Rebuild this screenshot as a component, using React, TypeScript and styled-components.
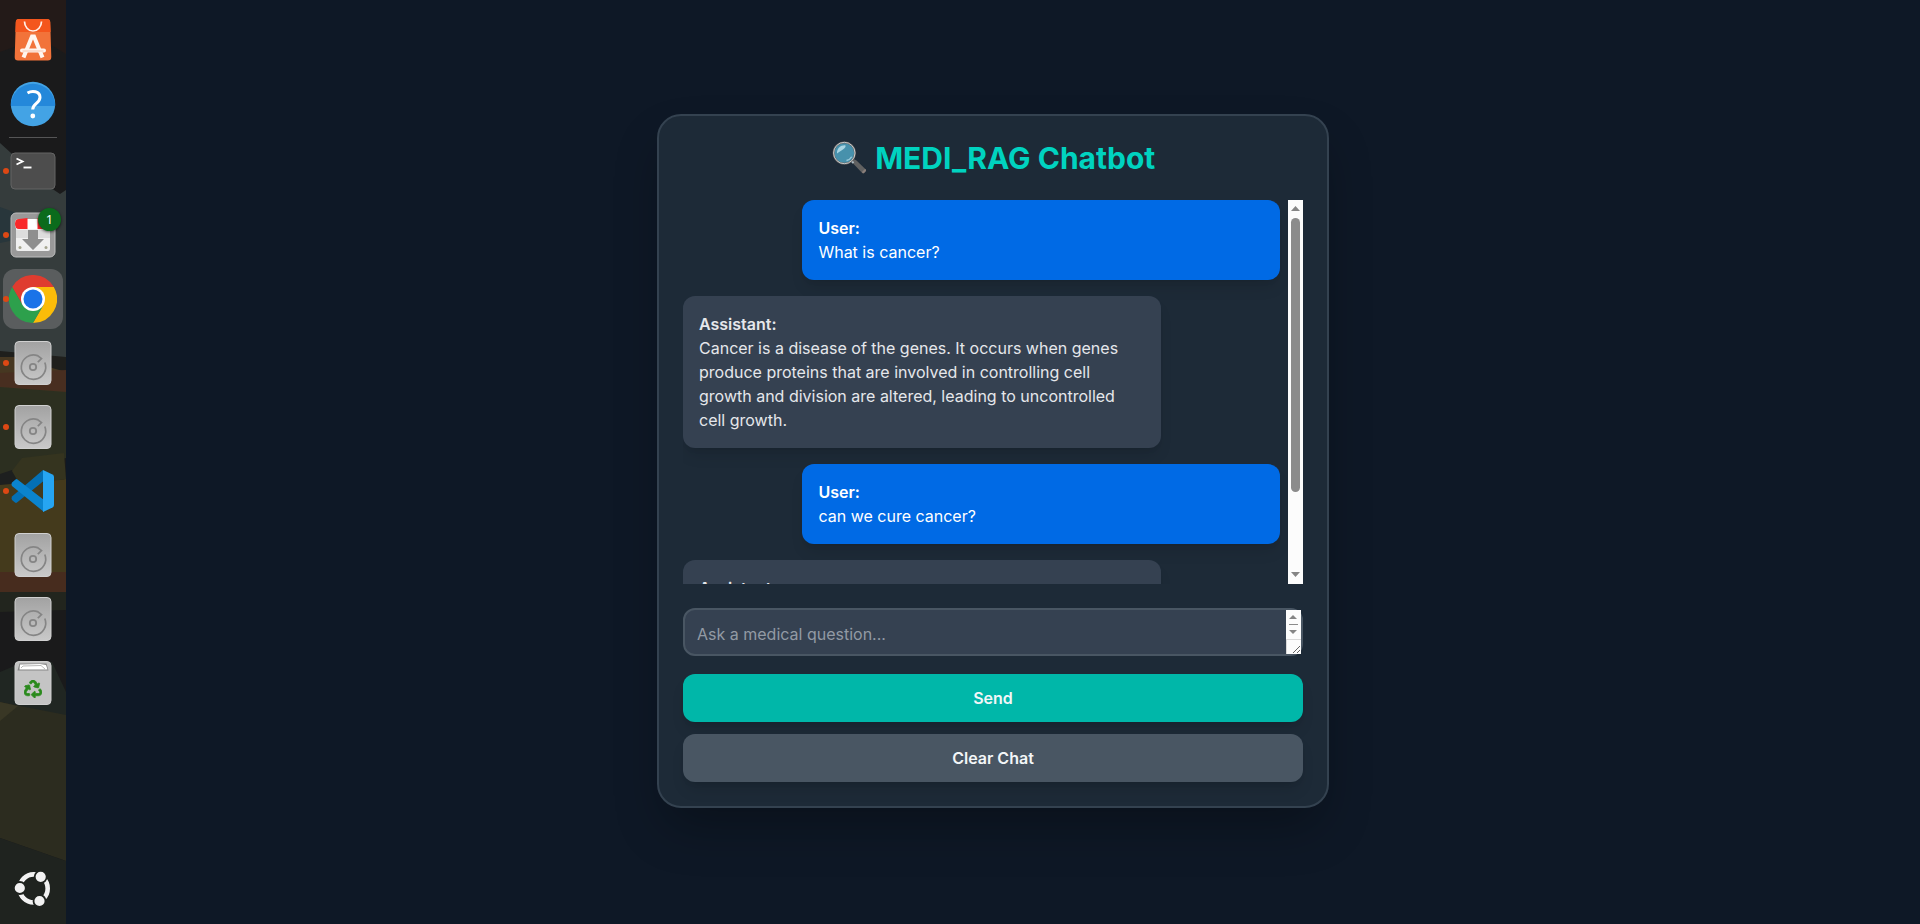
import React from "react";
import styled, { createGlobalStyle, css } from "styled-components";
import { FaRecycle } from "react-icons/fa";

const Global = createGlobalStyle`
  * { box-sizing: border-box; }
  html, body { margin: 0; padding: 0; }
  body {
    font-family: Inter, "Noto Sans", sans-serif;
    font-size: 16px;
    line-height: 24px;
    color: #f3f4f6;
    background: #0e1826;
    overflow: hidden;
  }
`;

const Desktop = styled.div`
  display: flex;
  width: 1920px;
  height: 924px;
`;

const Dock = styled.aside`
  position: relative;
  width: 66px;
  height: 924px;
  flex: none;
  overflow: hidden;
  background: #1a1a1b;
`;

const Wallpaper = styled.svg`
  position: absolute;
  inset: 0;
`;

const DockItems = styled.nav`
  position: relative;
  display: flex;
  flex-direction: column;
  height: 100%;
  padding: 8px 0 4px;
`;

const DockItem = styled.div<{ $active?: boolean }>`
  position: relative;
  width: 60px;
  height: 60px;
  margin: 2px 3px;
  border-radius: 12px;
  display: flex;
  align-items: center;
  justify-content: center;
  flex: none;
  ${(p) => p.$active && css`background: #5a5d5e;`}
`;

const RunningDot = styled.i`
  position: absolute;
  left: 0;
  top: 27px;
  width: 6px;
  height: 6px;
  border-radius: 50%;
  background: #dd4814;
`;

const Separator = styled.hr`
  width: 48px;
  height: 1px;
  margin: 1px 9px;
  border: 0;
  flex: none;
  background: #555556;
`;

const Spacer = styled.div`
  flex: 1;
`;

const Badge = styled.span`
  position: absolute;
  top: 3px;
  left: 35px;
  width: 23px;
  height: 23px;
  border-radius: 50%;
  background: #0b6b1c;
  box-shadow: 0 1px 3px rgba(0, 0, 0, 0.6);
  color: #fff;
  font: 13px/23px "Noto Sans", sans-serif;
  text-align: center;
`;

const RecycleMark = styled(FaRecycle)`
  position: absolute;
  left: 21px;
  top: 27px;
  width: 18px;
  height: 18px;
  color: #2a8a1c;
  stroke: #2a8a1c;
  stroke-width: 22px;
`;

const Main = styled.main`
  flex: 1;
  display: flex;
  align-items: flex-start;
  justify-content: center;
  padding-top: 114px;
  background: #0e1826;
`;

const Card = styled.section`
  width: 672px;
  height: 694px;
  padding: 24px;
  border: 2px solid #344250;
  border-radius: 24px;
  background: #1d2a37;
  box-shadow: 0 25px 50px -8px rgba(0, 0, 0, 0.3);
`;

const Title = styled.h1`
  display: flex;
  justify-content: center;
  align-items: center;
  gap: 8.5px;
  height: 36px;
  margin: 0 0 24px;
  font-size: 30px;
  font-weight: 700;
  line-height: 36px;
  color: #00d3c0;
`;

const ChatBox = styled.div`
  display: flex;
  height: 384px;
  margin-bottom: 24px;
  overflow: hidden;
`;

const Messages = styled.div`
  flex: 1;
  display: flex;
  flex-direction: column;
  gap: 16px;
  padding-right: 8px;
`;

const Bubble = styled.article<{ $user?: boolean }>`
  flex: none;
  width: 80%;
  padding: 16px;
  border-radius: 12px;
  box-shadow: 0 10px 15px -3px rgba(0, 0, 0, 0.1), 0 4px 6px -4px rgba(0, 0, 0, 0.1);
  align-self: ${(p) => (p.$user ? "flex-end" : "flex-start")};
  background: ${(p) => (p.$user ? "#006ae5" : "#354151")};
  color: ${(p) => (p.$user ? "#ffffff" : "#e5e7eb")};
`;

const Author = styled.strong`
  display: block;
  font-weight: 600;
`;

const Text = styled.p`
  margin: 0;
`;

const ScrollTrack = styled.div`
  width: 15px;
  flex: none;
  display: flex;
  flex-direction: column;
  align-items: center;
  justify-content: space-between;
  background: #fcfcfc;
  padding: 6px 0 7px;
`;

const Arrow = styled.i<{ $down?: boolean; $small?: boolean }>`
  width: ${(p) => (p.$small ? 8 : 9)}px;
  height: ${(p) => (p.$small ? 4 : 5)}px;
  margin-right: ${(p) => (p.$small ? 1 : 0)}px;
  flex: none;
  background: #858585;
  clip-path: ${(p) =>
    p.$down ? "polygon(0 0, 100% 0, 50% 100%)" : "polygon(0 100%, 100% 100%, 50% 0)"};
`;

const Thumb = styled.div`
  width: 9px;
  height: 274px;
  margin-top: 7px;
  margin-bottom: auto;
  border-radius: 5px;
  background: #8b8b8b;
`;

const Field = styled.div`
  display: flex;
  height: 48px;
  margin-bottom: 18px;
  border: 2px solid #495663;
  border-radius: 12px;
  background: #354151;
`;

const Placeholder = styled.span`
  flex: 1;
  padding: 12px;
  color: #929aa4;
`;

const FieldScroll = styled.div`
  width: 15px;
  height: 44px;
  flex: none;
  display: flex;
  flex-direction: column;
  align-items: center;
  background: #fcfcfc;
  padding-top: 5px;
`;

const MiniThumb = styled.i`
  width: 9px;
  height: 1px;
  margin: 5px 0;
  background: #8b8b8b;
`;

const Grip = styled.svg`
  margin-top: auto;
  display: block;
`;

const Button = styled.button<{ $primary?: boolean }>`
  display: block;
  width: 100%;
  height: 48px;
  margin: 0 0 12px;
  padding: 0;
  border: 0;
  border-radius: 12px;
  font: 600 16px/24px Inter, sans-serif;
  color: #f3f6f8;
  background: ${(p) => (p.$primary ? "#00b7a9" : "#495663")};
  box-shadow: 0 10px 15px -3px rgba(0, 0, 0, 0.12), 0 4px 6px -4px rgba(0, 0, 0, 0.12);
`;

const Magnifier = () => (
  <svg width="36" height="36" viewBox="0 0 36 36">
    <path d="M20.500 21.500l2.800-2.300 2.200 1.300 9.300 9c.8.900-2.600 4.200-3.600 3.600l-9.300-9.800z" fill="#616161" />
    <path d="M32 33.400c1 .3 3.600-2.300 3-3.600l-1-.9-3.100 3.200z" fill="#8a7f7a" />
    <path d="M20 20.500l2.500 2.500" stroke="#b0bec5" strokeWidth="2" />
    <circle cx="13.300" cy="13" r="10.700" fill="#4791ac" stroke="#616161" strokeWidth="1.800" />
    <circle cx="13.300" cy="13" r="10.700" fill="none" stroke="#c9c9c9" strokeWidth="1" />
    <path d="M6 13.500C5.700 8.500 10 4.800 14.500 5.400 15.500 8 9.500 10.500 6 13.500z" fill="#a8d5e3" />
    <path d="M15.500 20.500c2.500-.5 4-1.600 5.200-3.700" stroke="#9ccbdc" strokeWidth="1.300" fill="none" />
  </svg>
);

const StoreIcon = () => (
  <svg width="38" height="44" viewBox="0 0 38 44">
    <path d="M5 1h28q3 0 3.200 3l1.100 35q0 3.500-3.500 3.500H4Q.700 42.500.700 39L1.800 4Q2 1 5 1z" fill="#f2733a" />
    <path d="M5 1h28q3 0 3.200 3l.4 10H1.400l.4-10Q2 1 5 1z" fill="#f4561d" />
    <path d="M10.500 3.500a8.500 9.500 0 0 0 17 0" fill="none" stroke="#fff0e8" strokeWidth="1.700" />
    <path d="M9.500 39.500L18 18.500h2l8.500 21" fill="none" stroke="#fff5ef" strokeWidth="4" />
    <path d="M8 32.500h22" stroke="#fff5ef" strokeWidth="4" strokeLinecap="round" />
    <path d="M8.500 33h21" stroke="#f6c7b1" strokeWidth="1" />
  </svg>
);

const HelpIcon = () => (
  <svg width="46" height="46" viewBox="0 0 46 46">
    <circle cx="23" cy="23" r="22.200" fill="#43a3e5" />
    <path d="M.8 25a22.200 22.200 0 1 1 44.400 0z" fill="#2488da" />
    <path d="M17.500 12c4.500-2.700 12.500-2 12.500 4.200 0 6-7.300 6.300-7.300 12.300" fill="none" stroke="#fff" strokeWidth="3" />
    <circle cx="22.800" cy="35" r="2.400" fill="#fff" />
  </svg>
);

const TerminalIcon = () => (
  <svg width="46" height="38" viewBox="0 0 46 38">
    <rect x="1" y="1" width="44" height="36" rx="4" fill="#4d4d4d" stroke="#646464" />
    <path d="M6.500 6.500l6 3-6 3" fill="none" stroke="#fff" strokeWidth="1.900" />
    <path d="M13.500 15.500h8" stroke="#fff" strokeWidth="1.900" />
  </svg>
);

const InstallerIcon = () => (
  <svg width="46" height="46" viewBox="0 0 46 46">
    <rect x="1" y="1" width="44" height="44" rx="5" fill="#999" stroke="#bdbdbd" />
    <path d="M6 13h34v24q0 2-2 2H8q-2 0-2-2z" fill="#f0f0f0" />
    <path d="M6 18h12v8H6zM28 18h12v8H28z" fill="#ddd" />
    <rect x="5" y="7" width="34" height="10" rx="4" fill="#fff" />
    <path d="M17.500 6v11H9q-4 0-4-5t4-5zM27.500 6h11v11h-11z" fill="#f9292b" />
    <path d="M18 18h10v9h6L23 38 12 27h6z" fill="#8e8e8e" />
    <circle cx="10" cy="35.500" r="1.500" fill="#a5a58f" />
    <circle cx="36" cy="35.500" r="1.500" fill="#a5a58f" />
  </svg>
);

const ChromeIcon = () => (
  <svg width="48" height="48" viewBox="0 0 48 48">
    <path d="M24 24L3.200 12A24 24 0 0 1 44.800 12z" fill="#df3c2f" />
    <path d="M24 12h20.800A24 24 0 0 1 24 48l10.400-18z" fill="#fbbc09" />
    <path d="M13.600 30L3.200 12 24 12z" fill="#df3c2f" />
    <path d="M3.200 12l10.400 18L24 36l10.400-6L24 48A24 24 0 0 1 3.200 12z" fill="#2da04c" />
    <circle cx="24" cy="24" r="12" fill="#fff" />
    <circle cx="24" cy="24" r="9.500" fill="#1a73e8" />
  </svg>
);

const DriveIcon = () => (
  <svg width="38" height="46" viewBox="0 0 38 46">
    <defs>
      <linearGradient id="metal" x1="0" y1="0" x2="0" y2="1">
        <stop offset="0" stopColor="#a2a2a2" />
        <stop offset="1" stopColor="#c9c9c9" />
      </linearGradient>
    </defs>
    <rect x="1" y="1.500" width="36" height="43" rx="4" fill="url(#metal)" stroke="#d0d0d0" />
    <path
      d="M30.800 22.500A12.200 12.200 0 1 1 23.500 15.600L27.500 18.500L23.800 22.200"
      fill="none"
      stroke="#858585"
      strokeWidth="1.700"
    />
    <circle cx="19" cy="27" r="3.200" fill="none" stroke="#858585" strokeWidth="1.800" />
  </svg>
);

const CodeIcon = () => (
  <svg width="44" height="44" viewBox="0 0 44 44">
    <path d="M1 27.500L32 1v11.500L6 33.500q-1 .8-2 0L1 31q-1-1.700 0-3.500z" fill="#0470b5" />
    <path d="M1 13.500l3.500-3q1-.8 2 0L33 31v12L1 17q-1-1.700 0-3.500z" fill="#0b84ce" />
    <path d="M32 1l9.500 4.500q1.500.8 1.500 2.500v28q0 1.700-1.500 2.500L32 43z" fill="#26a5f2" />
  </svg>
);

const TrashIcon = () => (
  <svg width="38" height="46" viewBox="0 0 38 46">
    <rect x="1" y="1.500" width="36" height="43" rx="4" fill="#c4c4c4" stroke="#cfcfcf" />
    <path d="M5.500 3.500h27l2 7h-31z" fill="#858585" />
    <path d="M6 4.500l20-.5 6 1 1.500 4.500h-28z" fill="#fff" />
    <path d="M7 8l2-2 18-.5 4 3.500" fill="none" stroke="#999" strokeWidth=".7" />
  </svg>
);

const UbuntuIcon = () => (
  <svg width="38" height="38" viewBox="0 0 38 38">
    <circle cx="19.700" cy="19.400" r="14" fill="none" stroke="#f2f2f2" strokeWidth="4.600" />
    <g fill="#f2f2f2" stroke="#1f231f" strokeWidth="1.800">
      <circle cx="5.800" cy="19" r="6" />
      <circle cx="26.700" cy="7.800" r="6" />
      <circle cx="25.500" cy="32" r="6" />
    </g>
  </svg>
);

export default function App() {
  return (
    <Desktop>
      <Global />
      <Dock>
        <Wallpaper width="66" height="924">
          <path d="M0 0h66v54L40 38 0 52z" fill="#231a18" />
          <path d="M0 143l11 10 43 37 6 4 6-4v170H0z" fill="#353c3c" />
          <path d="M0 207l28 10-8 22-20 4z" fill="#28363b" />
          <path d="M0 351l66 6v15l-66-8z" fill="#1f1f1c" />
          <path d="M0 357l14 0 52 15v20H0z" fill="#463721" />
          <path d="M0 373l66-3v22l-66-5z" fill="#482e20" />
          <path d="M0 387l66 5v66L0 476z" fill="#2c2f20" />
          <path d="M0 474l12-4 18 15H0z" fill="#1d1f1f" />
          <path d="M0 485l66-6v93H0z" fill="#443a1c" />
          <path d="M22 458l42-5 2 26-40 6H20l-8-14z" fill="#35341f" />
          <path d="M0 572h66v20H0z" fill="#472c1e" />
          <path d="M0 592h66v18l-66 2z" fill="#22251e" />
          <path d="M0 672l24-10h28l14 30v24L0 702z" fill="#202622" />
          <path d="M0 702l66 13v146L0 838z" fill="#2c2c1f" />
          <path d="M0 702l18 4-18 15z" fill="#393725" />
          <path d="M0 838l66 23v63H0z" fill="#1f231f" />
        </Wallpaper>
        <DockItems>
          <DockItem><StoreIcon /></DockItem>
          <DockItem><HelpIcon /></DockItem>
          <Separator />
          <DockItem><RunningDot /><TerminalIcon /></DockItem>
          <DockItem><RunningDot /><InstallerIcon /><Badge>1</Badge></DockItem>
          <DockItem $active><RunningDot /><ChromeIcon /></DockItem>
          <DockItem><RunningDot /><DriveIcon /></DockItem>
          <DockItem><RunningDot /><DriveIcon /></DockItem>
          <DockItem><RunningDot /><CodeIcon /></DockItem>
          <DockItem><DriveIcon /></DockItem>
          <DockItem><DriveIcon /></DockItem>
          <DockItem><TrashIcon /><RecycleMark /></DockItem>
          <Spacer />
          <DockItem><UbuntuIcon /></DockItem>
        </DockItems>
      </Dock>
      <Main>
        <Card>
          <Title><Magnifier />MEDI_RAG Chatbot</Title>
          <ChatBox>
            <Messages>
              <Bubble $user>
                <Author>User:</Author>
                <Text>What is cancer?</Text>
              </Bubble>
              <Bubble>
                <Author>Assistant:</Author>
                <Text>
                  Cancer is a disease of the genes. It occurs when genes produce proteins that are
                  involved in controlling cell growth and division are altered, leading to
                  uncontrolled cell growth.
                </Text>
              </Bubble>
              <Bubble $user>
                <Author>User:</Author>
                <Text>can we cure cancer?</Text>
              </Bubble>
              <Bubble>
                <Author>Assistant:</Author>
              </Bubble>
            </Messages>
            <ScrollTrack>
              <Arrow />
              <Thumb />
              <Arrow $down />
            </ScrollTrack>
          </ChatBox>
          <Field>
            <Placeholder>Ask a medical question...</Placeholder>
            <FieldScroll>
              <Arrow $small />
              <MiniThumb />
              <Arrow $down $small />
              <Grip width="15" height="15" viewBox="0 0 15 15">
                <path d="M0 .5h15M.5 0v15" stroke="#d9d9d9" />
                <path d="M7 14l7-7M11 14l3-3" stroke="#666" strokeWidth="1" />
              </Grip>
            </FieldScroll>
          </Field>
          <Button $primary>Send</Button>
          <Button>Clear Chat</Button>
        </Card>
      </Main>
    </Desktop>
  );
}
